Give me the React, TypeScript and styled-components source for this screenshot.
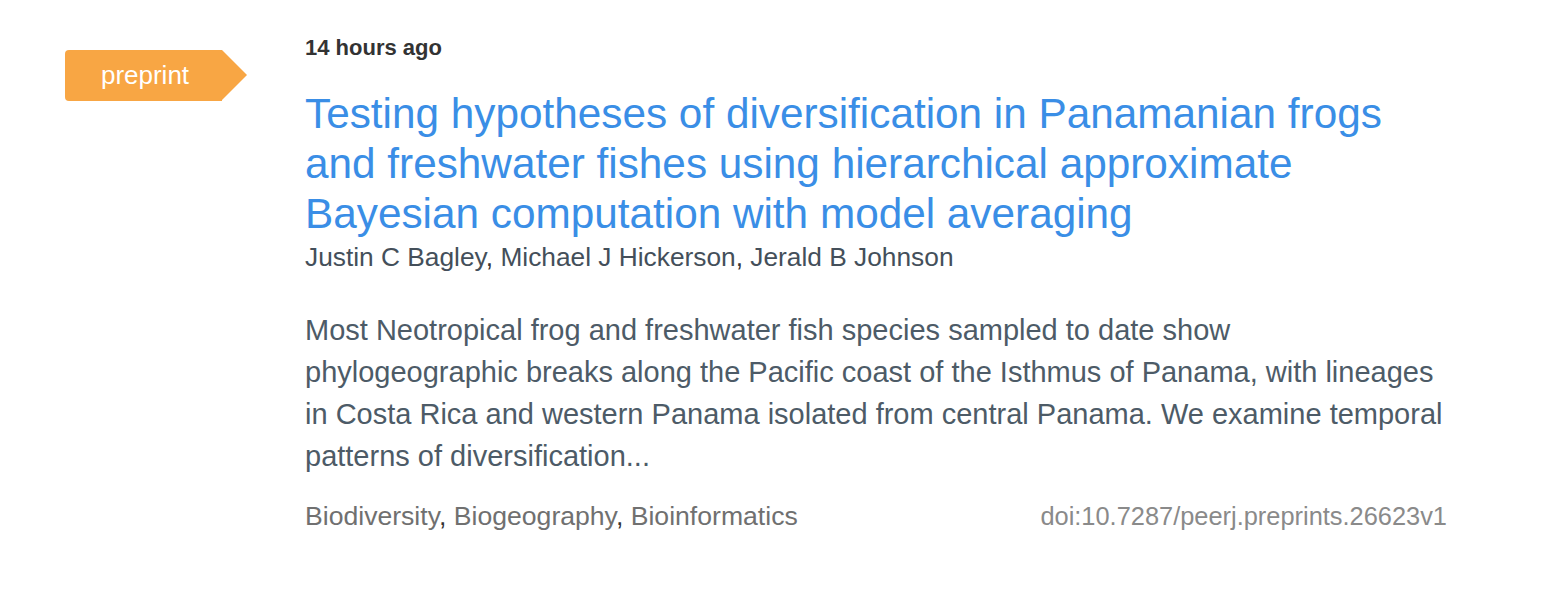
import React from "react";
import styled, { createGlobalStyle } from "styled-components";

const Global = createGlobalStyle`
  html, body { margin: 0; padding: 0; background: #ffffff; }
  body { font-family: "Liberation Sans", Arial, Helvetica, sans-serif; }
`;

const Page = styled.div`
  display: grid;
  grid-template-columns: 240px 1142px;
  padding: 34px 0 0 65px;
  width: 1564px;
  height: 602px;
  box-sizing: border-box;
`;

const BadgeCol = styled.div`
  padding-top: 16px;
`;

const Badge = styled.div`
  position: relative;
  display: flex;
  align-items: center;
  justify-content: center;
  width: 157px;
  height: 51px;
  padding-left: 3px;
  background: #f8a644;
  border-radius: 4px 0 0 4px;
  color: #ffffff;
  font-size: 26px;
  box-sizing: border-box;
  &::after {
    content: "";
    position: absolute;
    top: 0;
    left: 157px;
    border-top: 25.5px solid transparent;
    border-bottom: 25.5px solid transparent;
    border-left: 25px solid #f8a644;
  }
`;

const Main = styled.div`
  display: flex;
  flex-direction: column;
`;

const Time = styled.div`
  font-size: 22px;
  font-weight: 700;
  color: #333333;
  line-height: 28px;
`;

const Title = styled.a`
  display: block;
  margin-top: 27px;
  font-size: 42.3px;
  line-height: 50px;
  color: #3a8ee6;
  text-decoration: none;
`;

const Authors = styled.div`
  font-size: 26.3px;
  line-height: 36px;
  color: #333333;
`;

const Author = styled.span`
  color: #444f5a;
`;

const Abstract = styled.p`
  margin: 34px 0 0;
  font-size: 29px;
  line-height: 42px;
  color: #4d5b67;
`;

const Footer = styled.div`
  display: flex;
  justify-content: space-between;
  align-items: baseline;
  margin-top: 24px;
  width: 1142px;
  line-height: 30px;
`;

const Keywords = styled.div`
  font-size: 26.6px;
  color: #333333;
`;

const Keyword = styled.span`
  color: #707070;
`;

const Doi = styled.div`
  font-size: 25.4px;
  color: #8a8a8a;
`;

const authors = ["Justin C Bagley", "Michael J Hickerson", "Jerald B Johnson"];
const keywords = ["Biodiversity", "Biogeography", "Bioinformatics"];

export default function App() {
  return (
    <>
      <Global />
      <Page>
        <BadgeCol>
          <Badge>preprint</Badge>
        </BadgeCol>
        <Main>
          <Time>14 hours ago</Time>
          <Title href="#">
            Testing hypotheses of diversification in Panamanian frogs
            <br />
            and freshwater fishes using hierarchical approximate
            <br />
            Bayesian computation with model averaging
          </Title>
          <Authors>
            {authors.map((a, i) => (
              <React.Fragment key={a}>
                <Author>{a}</Author>
                {i < authors.length - 1 ? ", " : ""}
              </React.Fragment>
            ))}
          </Authors>
          <Abstract>
            Most Neotropical frog and freshwater fish species sampled to date show
            <br />
            phylogeographic breaks along the Pacific coast of the Isthmus of Panama, with lineages
            <br />
            in Costa Rica and western Panama isolated from central Panama. We examine temporal
            <br />
            patterns of diversification...
          </Abstract>
          <Footer>
            <Keywords>
              {keywords.map((k, i) => (
                <React.Fragment key={k}>
                  <Keyword>{k}</Keyword>
                  {i < keywords.length - 1 ? ", " : ""}
                </React.Fragment>
              ))}
            </Keywords>
            <Doi>doi:10.7287/peerj.preprints.26623v1</Doi>
          </Footer>
        </Main>
      </Page>
    </>
  );
}
